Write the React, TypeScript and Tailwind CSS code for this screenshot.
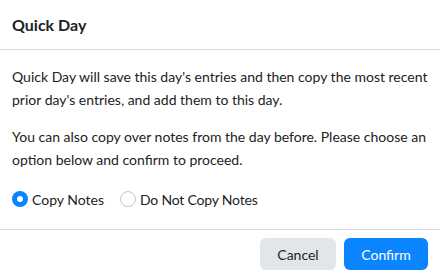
export default function App() {
  return (
    <div className="w-[440px] h-[275px] bg-white overflow-hidden text-[#222222]" style={{ fontFamily: "Lato, 'Noto Sans', sans-serif" }}>
      <div className="h-[50px] px-3 flex items-center border-b border-[#d5dbe0]">
        <h1 className="text-[16px] font-bold pt-[1px]">Quick Day</h1>
      </div>
      <div className="h-[179px] px-3 pt-[15px]">
        <p className="text-[14px] leading-[23px]">Quick Day will save this day's entries and then copy the most recent prior day's entries, and add them to this day.</p>
        <p className="text-[14px] leading-[23px] mt-[14px]">You can also copy over notes from the day before. Please choose an option below and confirm to proceed.</p>
        <div className="mt-[16px] flex items-center h-[24px] text-[14px]">
          <label className="flex items-center gap-[4px]">
            <span className="w-[16px] h-[16px] rounded-full bg-[#0a84ff] flex items-center justify-center">
              <span className="w-[6px] h-[6px] rounded-full bg-white" />
            </span>
            <span>Copy Notes</span>
          </label>
          <label className="flex items-center gap-[4px] ml-[16px]">
            <span className="w-[16px] h-[16px] rounded-full border border-[#c8c8c8] bg-white" />
            <span className="tracking-[-0.2px]">Do Not Copy Notes</span>
          </label>
        </div>
      </div>
      <div className="border-t border-[#d5dbe0] px-3 pt-2 flex justify-end gap-2">
        <button className="w-[76px] h-[32px] rounded-[6px] bg-[#e3e6e9] text-[14px] text-[#222]">Cancel</button>
        <button className="w-[84px] h-[32px] rounded-[6px] bg-[#0a84ff] text-[14px] text-white">Confirm</button>
      </div>
    </div>
  );
}
